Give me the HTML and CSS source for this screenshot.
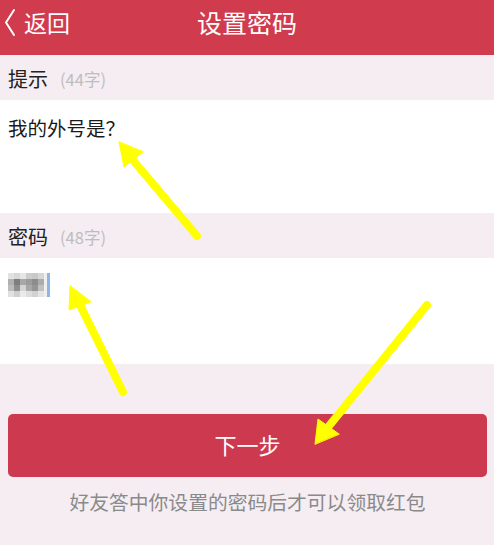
FILE: index.html
```html
<!DOCTYPE html>
<html lang="zh">
<head>
<meta charset="utf-8">
<title>设置密码</title>
<link rel="stylesheet" href="styles.css">
</head>
<body>
<div class="page">
  <header class="topbar">
    <div class="back">
      <svg class="chev" width="14" height="30" viewBox="0 0 14 30"><polyline points="11,3 3,15.5 11,28" fill="none" stroke="#fff" stroke-width="2" stroke-linejoin="round" stroke-linecap="round"/></svg>
      <span>返回</span>
    </div>
    <h1 class="title">设置密码</h1>
    <div></div>
  </header>

  <div class="label-row"><span class="label">提示</span><span class="hint">(44字)</span></div>
  <div class="field"><span class="field-text">我的外号是？</span></div>

  <div class="label-row"><span class="label">密码</span><span class="hint">(48字)</span></div>
  <div class="field">
    <div class="masked">
      <svg width="39" height="24" viewBox="0 0 39 24">
        <rect x="0" y="0" width="39" height="24" fill="#efefef"/>
        <rect x="0" y="0" width="6" height="6" fill="#e2e2e2"/>
        <rect x="6" y="0" width="6" height="6" fill="#d8d8d8"/>
        <rect x="12" y="0" width="6" height="6" fill="#e6e6e6"/>
        <rect x="18" y="0" width="6" height="6" fill="#cccccc"/>
        <rect x="24" y="0" width="6" height="6" fill="#c8c8c8"/>
        <rect x="30" y="0" width="6" height="6" fill="#d6d6d6"/>
        <rect x="0" y="6" width="6" height="6" fill="#b0b0b0"/>
        <rect x="6" y="6" width="6" height="6" fill="#7e7e7e"/>
        <rect x="12" y="6" width="6" height="6" fill="#a8a8a8"/>
        <rect x="18" y="6" width="6" height="6" fill="#9c9c9c"/>
        <rect x="24" y="6" width="6" height="6" fill="#8c8c8c"/>
        <rect x="30" y="6" width="6" height="6" fill="#acacac"/>
        <rect x="0" y="12" width="6" height="6" fill="#bcbcbc"/>
        <rect x="6" y="12" width="6" height="6" fill="#8e8e8e"/>
        <rect x="12" y="12" width="6" height="6" fill="#d4d4d4"/>
        <rect x="18" y="12" width="6" height="6" fill="#a8a8a8"/>
        <rect x="24" y="12" width="6" height="6" fill="#959595"/>
        <rect x="30" y="12" width="6" height="6" fill="#c0c0c0"/>
        <rect x="0" y="18" width="6" height="6" fill="#e0e0e0"/>
        <rect x="6" y="18" width="6" height="6" fill="#cfcfcf"/>
        <rect x="12" y="18" width="6" height="6" fill="#eaeaea"/>
        <rect x="18" y="18" width="6" height="6" fill="#dddddd"/>
        <rect x="24" y="18" width="6" height="6" fill="#d2d2d2"/>
        <rect x="30" y="18" width="6" height="6" fill="#e4e4e4"/>
      </svg>
      <span class="cursor"></span>
    </div>
  </div>

  <div class="actions">
    <button class="next">下一步</button>
    <p class="note">好友答中你设置的密码后才可以领取红包</p>
  </div>

  <svg class="arrows" width="494" height="545" viewBox="0 0 494 545">
    <g stroke="#ffff00" stroke-width="8" stroke-linecap="round" fill="#ffff00">
      <line x1="197" y1="236" x2="132" y2="159"/>
      <polygon points="119,142 124,167 143,152" stroke-width="1" stroke-linejoin="round"/>
      <line x1="123" y1="392" x2="79" y2="303"/>
      <polygon points="70,286 69,310 91,302" stroke-width="1" stroke-linejoin="round"/>
      <line x1="427" y1="305" x2="329" y2="426"/>
      <polygon points="315,444 318,419 339,434" stroke-width="1" stroke-linejoin="round"/>
    </g>
  </svg>
</div>
</body>
</html>
```
FILE: styles.css
```css
* { box-sizing: border-box; }
html, body { margin: 0; padding: 0; }
body {
  background: #f5edf2;
  font-family: "Noto Sans CJK SC", "Noto Sans", "Liberation Sans", sans-serif;
}
.page {
  position: relative;
  width: 494px;
  height: 545px;
  overflow: hidden;
  background: #f5edf2;
}
.topbar {
  height: 55px;
  background: #d13b4e;
  color: #fff;
  display: grid;
  grid-template-columns: 1fr auto 1fr;
  align-items: start;
  padding-top: 7px;
}
.back {
  display: flex;
  align-items: center;
  gap: 7px;
  padding-left: 3px;
  font-size: 23px;
  line-height: 30px;
  height: 30px;
}
.chev { display: block; }
.title {
  margin: 0;
  font-weight: 400;
  font-size: 25px;
  line-height: 30px;
}
.label-row {
  height: 45px;
  display: flex;
  align-items: center;
  padding-left: 8px;
  padding-top: 2px;
}
.label {
  font-size: 20px;
  color: #222;
}
.hint {
  margin-left: 12px;
  font-size: 16.5px;
  color: #bdbdbd;
}
.field {
  background: #fff;
  height: 113px;
  padding: 15px 8px 0;
}
.field + .label-row + .field { height: 106px; }
.field-text {
  font-size: 19.5px;
  line-height: 26px;
  color: #1a1a1a;
}
.masked {
  display: flex;
  align-items: flex-start;
}
.masked svg { display: block; }
.cursor {
  display: block;
  width: 3px;
  height: 24px;
  background: #8db6e6;
}
.actions {
  padding: 50px 7px 0 8px;
  display: flex;
  flex-direction: column;
  align-items: center;
}
.next {
  width: 100%;
  height: 63px;
  border: none;
  border-radius: 5px;
  background: #cd3a50;
  color: #fff;
  font-family: inherit;
  font-size: 22px;
  padding: 0 0 4px;
}
.note {
  margin: 12px 0 0;
  font-size: 19.8px;
  line-height: 26px;
  color: #8a8a8a;
}
.arrows {
  position: absolute;
  left: 0;
  top: 0;
  pointer-events: none;
}
```
